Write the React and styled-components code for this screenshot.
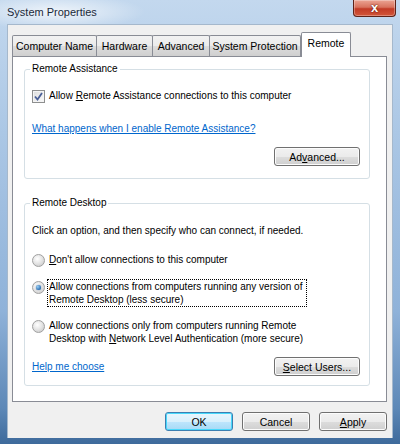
import React from "react"
import styled, { createGlobalStyle, css } from "styled-components"

const GlobalStyle = createGlobalStyle`
  html, body {
    margin: 0;
    padding: 0;
  }
  body {
    font-family: "Liberation Sans", Arial, sans-serif;
    font-size: 10px;
    color: #000;
  }
`

const Window = styled.div`
  width: 400px;
  height: 444px;
  overflow: hidden;
  display: flex;
  flex-direction: column;
  background:
    radial-gradient(ellipse 90px 18px at 55px 12px, rgba(255, 255, 255, 0.75), rgba(255, 255, 255, 0) 100%),
    linear-gradient(180deg, #c3d8ee 0%, #abc7e5 30%, #8fb2d9 70%, #5d88b7 92%, #3e6a9b 100%);
`

const TitleBar = styled.div`
  height: 24px;
  display: flex;
  justify-content: space-between;
  align-items: flex-start;
`

const Title = styled.div`
  padding: 4px 0 0 7px;
  font-size: 11px;
  color: #1b2a3a;
  line-height: 16px;
`

const CloseButton = styled.div`
  width: 43px;
  height: 17px;
  margin-right: 4px;
  box-sizing: border-box;
  border: 1px solid #5e2218;
  border-top: none;
  border-radius: 0 0 4px 4px;
  background: linear-gradient(180deg, #eba493 0%, #d8735e 45%, #c23b26 55%, #d2563a 100%);
  box-shadow: inset 0 0 0 1px rgba(255, 255, 255, 0.3);
  display: flex;
  align-items: center;
  justify-content: center;
  color: #fff;
  font-weight: bold;
  font-size: 13px;
  line-height: 13px;
  padding-bottom: 1px;
  text-shadow: 0 0 2px #6b1e12, 0 0 1px #6b1e12;
`

const Body = styled.div`
  margin: 0 7px;
  height: 414px;
  box-sizing: border-box;
  background: #f0f0f0;
  border: 1px solid #a5b8cc;
  border-bottom: none;
  display: flex;
  flex-direction: column;
`

const TabStrip = styled.div`
  display: flex;
  align-items: flex-end;
  height: 24px;
  margin-top: 7px;
  padding-left: 4px;
`

const Tab = styled.div`
  box-sizing: border-box;
  width: ${p => p.$w}px;
  height: 21px;
  border: 1px solid #898c95;
  border-bottom: none;
  margin-right: -1px;
  border-radius: 2px 2px 0 0;
  background: linear-gradient(180deg, #f2f2f2 0%, #ebebeb 50%, #dddddd 51%, #cfcfcf 100%);
  display: flex;
  align-items: center;
  justify-content: center;
  white-space: nowrap;
  font-size: 10.5px;
  ${p => p.$active && css`
    height: 25px;
    margin-bottom: -1px;
    margin-left: 1px;
    position: relative;
    z-index: 1;
    background: #fff;
    padding-bottom: 4px;
  `}
`

const Panel = styled.div`
  box-sizing: border-box;
  margin-left: 4px;
  width: 375px;
  height: 346px;
  border: 1px solid #898c95;
  background: #fff;
  padding: 5px 0 0 11px;
  display: flex;
  flex-direction: column;
  gap: 17px;
`

const Group = styled.fieldset`
  box-sizing: border-box;
  width: 346px;
  height: ${p => p.$h}px;
  margin: 0;
  padding: 0 9px 0 7px;
  border: 1px solid #d5dfe5;
  border-radius: 3px;
  min-width: 0;
`

const Legend = styled.legend`
  padding: 0 2px;
  margin-left: -2px;
  line-height: 14px;
`

const Stack = styled.div`
  display: flex;
  flex-direction: column;
  padding-top: ${p => p.$top}px;
`

const Row = styled.div`
  display: flex;
  align-items: ${p => (p.$top ? "flex-start" : "center")};
  gap: 4px;
  line-height: ${p => p.$lh || 14}px;
  margin-top: ${p => p.$mt || 0}px;
`

const Text = styled.div`
  line-height: 14px;
  margin-top: ${p => p.$mt || 0}px;
`

const CheckBox = styled.span`
  box-sizing: border-box;
  width: 13px;
  height: 13px;
  flex: none;
  border: 1px solid #8e8f8f;
  background: linear-gradient(135deg, #dcdcdc, #fbfbfb);
  box-shadow: inset 0 0 0 1px #f4f4f4;
  display: flex;
  align-items: center;
  justify-content: center;
`

const Radio = styled.span`
  box-sizing: border-box;
  width: 13px;
  height: 13px;
  flex: none;
  border-radius: 50%;
  border: 1px solid #a0a0a0;
  background: radial-gradient(circle at 40% 35%, #ffffff 0%, #e6e6e6 45%, #c2c2c2 100%);
  display: flex;
  align-items: center;
  justify-content: center;
  margin-top: ${p => (p.$top ? "0.5px" : "0")};
  &::after {
    content: "";
    display: ${p => (p.$checked ? "block" : "none")};
    width: 5px;
    height: 5px;
    border-radius: 50%;
    background: radial-gradient(circle at 35% 35%, #9ad0f5, #1b5fa8 80%);
    box-shadow: 0 0 1px #0c3f7a;
  }
`

const Label = styled.span`
  white-space: nowrap;
  ${p => p.$focus && css`
    border: 1px dotted #000;
    padding: 0 4px 0 1px;
    margin-left: -2px;
    margin-top: -1px;
  `}
`

const Link = styled.a`
  color: #0066cc;
  text-decoration: underline;
  line-height: 14px;
  cursor: pointer;
`

const BottomRow = styled.div`
  display: flex;
  align-items: center;
  justify-content: space-between;
  margin-top: ${p => p.$mt}px;
`

const Button = styled.button`
  box-sizing: border-box;
  width: ${p => p.$w || 68}px;
  height: 19px;
  padding: 0;
  font-family: inherit;
  font-size: 10.5px;
  color: #000;
  border: 1px solid ${p => (p.$default ? "#3c7fb1" : "#707070")};
  border-radius: 3px;
  background: ${p =>
    p.$default
      ? "linear-gradient(180deg, #eaf6fd 0%, #d9f0fc 50%, #bee6fd 51%, #a7d9f5 100%)"
      : "linear-gradient(180deg, #f2f2f2 0%, #ebebeb 50%, #dddddd 51%, #cfcfcf 100%)"};
  box-shadow: inset 0 0 0 1px ${p => (p.$default ? "#48d8fb" : "#fcfcfc")};
  align-self: ${p => (p.$end ? "flex-end" : "auto")};
  margin-top: ${p => p.$mt || 0}px;
`

const Footer = styled.div`
  display: flex;
  justify-content: flex-end;
  gap: 9px;
  margin-top: 10px;
  padding-right: 5px;
`

const Key = styled.u`
  text-decoration: underline;
`

function Check() {
  return (
    <svg width="9" height="9" viewBox="0 0 9 9">
      <path d="M1 4.5 L3.5 7.5 L8 1" fill="none" stroke="#4a5f97" strokeWidth="1.8" />
    </svg>
  )
}

const tabs = [
  { name: "Computer Name", w: 85 },
  { name: "Hardware", w: 57 },
  { name: "Advanced", w: 58 },
  { name: "System Protection", w: 92 },
]

export default function App() {
  return (
    <>
      <GlobalStyle />
      <Window>
        <TitleBar>
          <Title>System Properties</Title>
          <CloseButton>x</CloseButton>
        </TitleBar>
        <Body>
          <TabStrip>
            {tabs.map(t => (
              <Tab key={t.name} $w={t.w}>{t.name}</Tab>
            ))}
            <Tab $w={50} $active>Remote</Tab>
          </TabStrip>
          <Panel>
            <Group $h={117}>
              <Legend>Remote Assistance</Legend>
              <Stack $top={13}>
                <Row>
                  <CheckBox><Check /></CheckBox>
                  <Label>Allow <Key>R</Key>emote Assistance connections to this computer</Label>
                </Row>
                <Text $mt={19}>
                  <Link>What happens when I enable Remote Assistance?</Link>
                </Text>
                <Button $w={86} $end $mt={11}>Ad<Key>v</Key>anced...</Button>
              </Stack>
            </Group>
            <Group $h={190}>
              <Legend>Remote Desktop</Legend>
              <Stack $top={14}>
                <Text>Click an option, and then specify who can connect, if needed.</Text>
                <Row $mt={15}>
                  <Radio />
                  <Label><Key>D</Key>on't allow connections to this computer</Label>
                </Row>
                <Row $top $lh={13} $mt={13}>
                  <Radio $checked $top />
                  <Label $focus>
                    Allow connections from computers running any version of
                    <br />
                    Remote Desktop (less secure)
                  </Label>
                </Row>
                <Row $top $lh={13} $mt={12}>
                  <Radio $top />
                  <Label>
                    Allow connections only from computers running Remote
                    <br />
                    Desktop with <Key>N</Key>etwork Level Authentication (more secure)
                  </Label>
                </Row>
                <BottomRow $mt={12}>
                  <Link>Help me choose</Link>
                  <Button $w={86}><Key>S</Key>elect Users...</Button>
                </BottomRow>
              </Stack>
            </Group>
          </Panel>
          <Footer>
            <Button $default>OK</Button>
            <Button>Cancel</Button>
            <Button><Key>A</Key>pply</Button>
          </Footer>
        </Body>
      </Window>
    </>
  )
}
